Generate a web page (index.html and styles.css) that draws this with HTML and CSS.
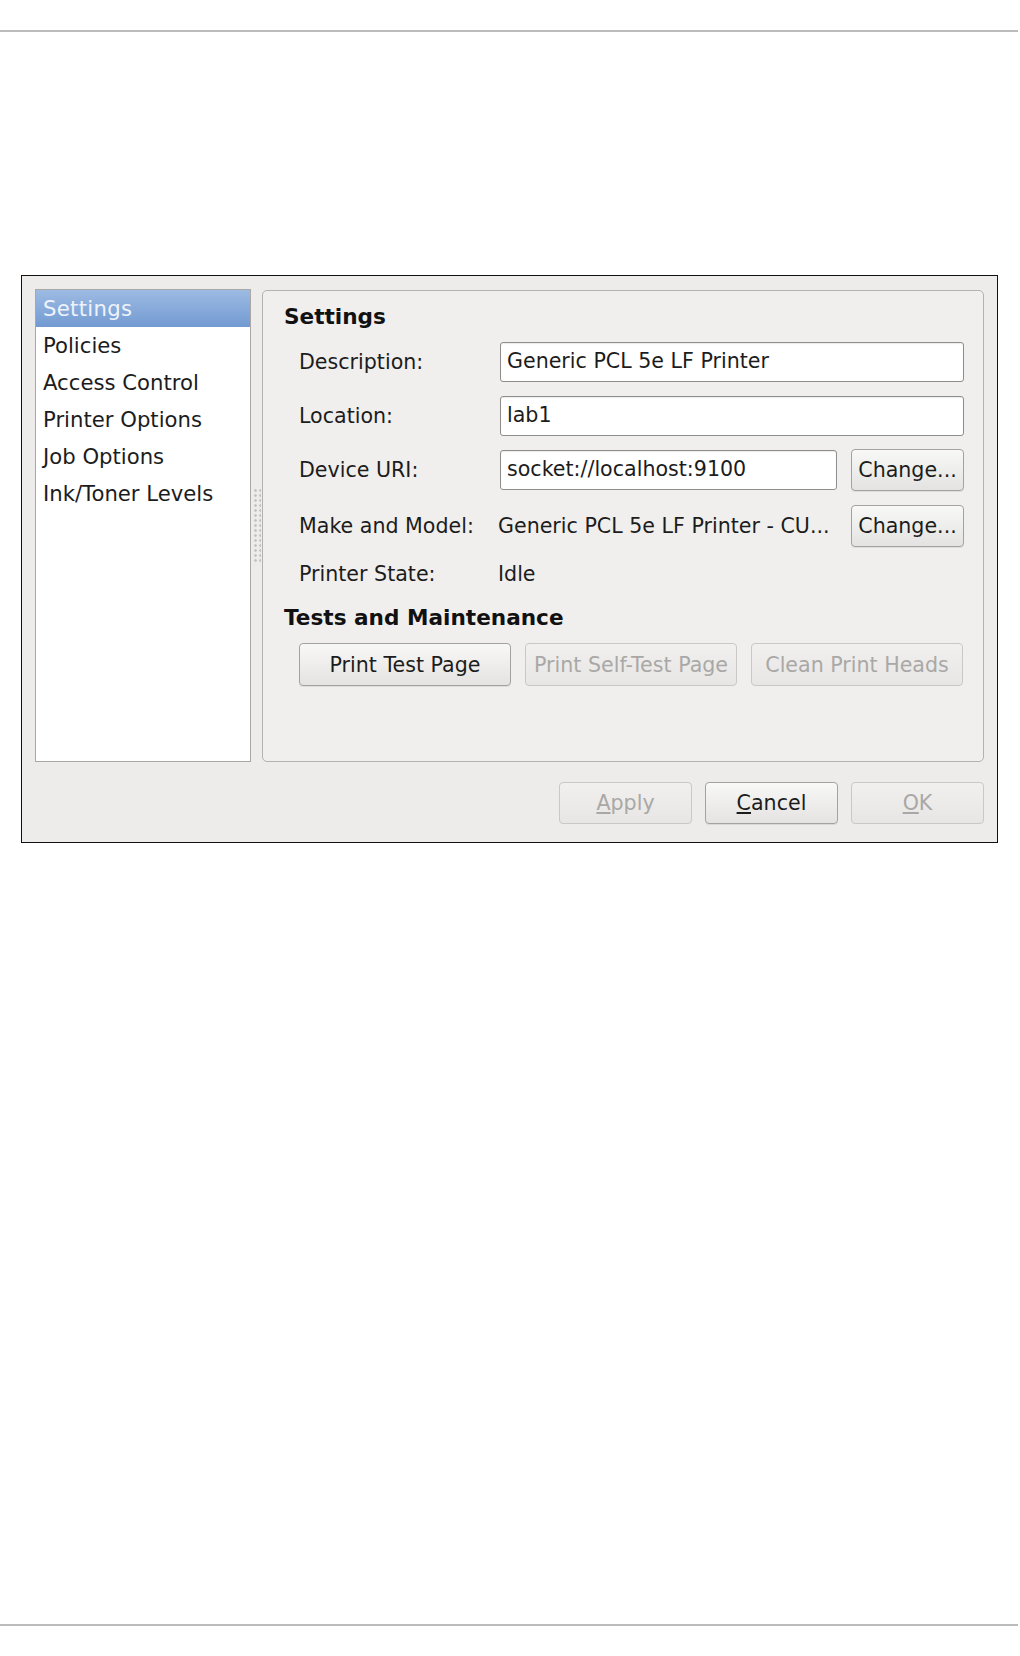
FILE: index.html
```html
<!DOCTYPE html>
<html lang="en">
<head>
  <meta charset="UTF-8">
  <title>Printer Properties</title>
  <link rel="stylesheet" href="styles.css">
</head>
<body>
  <div class="rule rule-top"></div>

  <div class="dialog">
    <div class="dialog-main">
      <!-- left list -->
      <ul class="side-list">
        <li class="selected">Settings</li>
        <li>Policies</li>
        <li>Access Control</li>
        <li>Printer Options</li>
        <li>Job Options</li>
        <li>Ink/Toner Levels</li>
      </ul>

      <div class="grip"><div class="grip-dots"></div></div>

      <!-- settings page -->
      <div class="frame">
        <h3 class="section-title">Settings</h3>
        <div class="form-grid">
          <span class="label">Description:</span>
          <div class="entry wide">Generic PCL 5e LF Printer</div>

          <span class="label">Location:</span>
          <div class="entry wide">lab1</div>

          <span class="label">Device URI:</span>
          <div class="entry">socket://localhost:9100</div>
          <button class="btn">Change...</button>

          <span class="label">Make and Model:</span>
          <span class="value">Generic PCL 5e LF Printer - CU...</span>
          <button class="btn">Change...</button>

          <span class="label">Printer State:</span>
          <span class="value">Idle</span>
        </div>

        <h3 class="section-title second">Tests and Maintenance</h3>
        <div class="test-buttons">
          <button class="btn">Print Test Page</button>
          <button class="btn" disabled>Print Self-Test Page</button>
          <button class="btn" disabled>Clean Print Heads</button>
        </div>
      </div>
    </div>

    <div class="dialog-buttons">
      <button class="btn" disabled><u>A</u>pply</button>
      <button class="btn"><u>C</u>ancel</button>
      <button class="btn" disabled><u>O</u>K</button>
    </div>
  </div>

  <div class="rule rule-bottom"></div>
</body>
</html>
```

FILE: styles.css
```css
* { box-sizing: border-box; }

body {
  margin: 0;
  background: #ffffff;
  font-family: 'DejaVu Sans', 'Liberation Sans', sans-serif;
  font-size: 20.6px;
  color: #1c1c1c;
}

.rule {
  width: 1018px;
  height: 2px;
  background: #bcbcbc;
}

.rule-top { margin-top: 30px; }
.rule-bottom { margin-top: 781px; }

.dialog {
  margin: 243px 0 0 21px;
  width: 977px;
  height: 568px;
  border: 1px solid #111;
  background: #edeceb;
  padding: 13px 13px 0 13px;
  display: flex;
  flex-direction: column;
}

.dialog-main {
  display: flex;
  height: 473px;
}

.side-list {
  list-style: none;
  margin: 0;
  padding: 0;
  width: 216px;
  background: #fff;
  border: 1px solid #a9a8a6;
  font-size: 21.2px;
}

.side-list li {
  height: 37px;
  line-height: 37px;
  padding-left: 7px;
  white-space: nowrap;
}

.side-list li.selected {
  background: linear-gradient(to bottom, #9dbbe3, #729ad1);
  color: #eef3fb;
  letter-spacing: 0.3px;
}

.grip {
  width: 11px;
  display: flex;
  align-items: center;
  justify-content: center;
}

.grip-dots {
  width: 8px;
  height: 76px;
  background-image: radial-gradient(circle, #c4c4c4 1px, transparent 1.6px);
  background-size: 5px 5px;
}

.frame {
  width: 722px;
  margin-top: 1px;
  border: 1px solid #b3b2b0;
  border-radius: 5px;
  background: #f0efee;
  padding: 14px 18px 0 21px;
}

.section-title {
  margin: 0;
  font-size: 21.6px;
  font-weight: bold;
  line-height: 24px;
  color: #111;
}

.section-title.second { margin-top: 19px; }

.form-grid {
  margin: 13px 0 0 15px;
  display: grid;
  grid-template-columns: 187px 337px 113px;
  grid-template-rows: 40px 40px 40px 43px 26px;
  column-gap: 14px;
  row-gap: 14px;
  align-items: center;
}

.label, .value { white-space: nowrap; }

.value { margin-left: -2px; }

.entry {
  height: 40px;
  line-height: 36px;
  background: #fff;
  border: 1px solid #8f8e8c;
  border-radius: 3px;
  padding-left: 6px;
  box-shadow: inset 0 1px 1px rgba(0,0,0,0.08);
  white-space: nowrap;
  overflow: hidden;
}

.entry.wide { grid-column: span 2; }

.btn {
  font-family: inherit;
  font-size: 20.6px;
  color: #1c1c1c;
  height: 42px;
  padding: 0;
  border: 1px solid #a3a2a0;
  border-radius: 4px;
  background: linear-gradient(to bottom, #f8f8f7, #e4e3e1);
  box-shadow: 0 1px 0 rgba(0,0,0,0.08);
  white-space: nowrap;
}

.btn:disabled {
  color: #a9a8a6;
  border-color: #c9c8c6;
  background: linear-gradient(to bottom, #f1f0ef, #e7e6e4);
  box-shadow: none;
}

.test-buttons {
  margin: 13px 0 0 15px;
  display: flex;
  gap: 14px;
}

.test-buttons .btn {
  width: 212px;
  height: 43px;
}

.dialog-buttons {
  margin-top: 20px;
  display: flex;
  justify-content: flex-end;
  gap: 13px;
}

.dialog-buttons .btn {
  width: 133px;
  height: 42px;
}
```
